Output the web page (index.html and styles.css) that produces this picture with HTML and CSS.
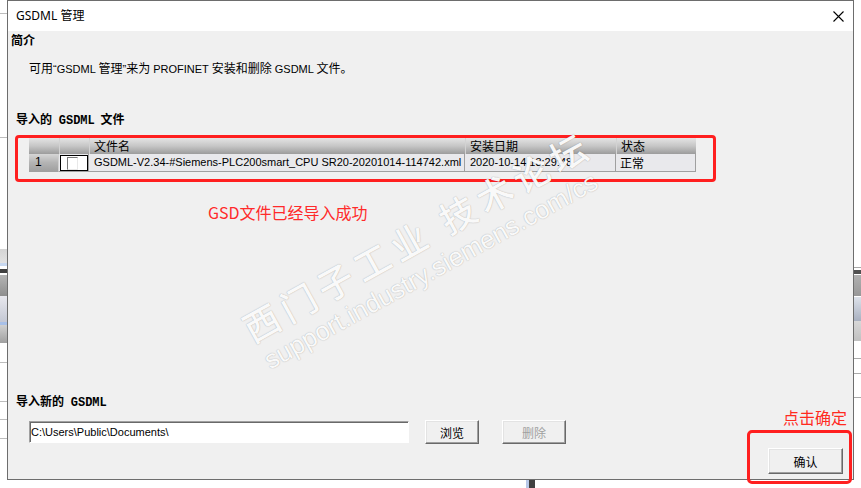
FILE: index.html
```html
<!DOCTYPE html>
<html lang="zh-CN">
<head>
<meta charset="utf-8">
<title>GSDML 管理</title>
<link rel="stylesheet" href="styles.css">
</head>
<body>
<div class="dialog">
  <div class="titlebar">
    <span class="title">GSDML 管理</span>
    <svg class="close" width="11" height="11" viewBox="0 0 11 11"><path d="M0.5 0.5 L10.5 10.5 M10.5 0.5 L0.5 10.5" stroke="#000" stroke-width="1.1" fill="none"/></svg>
  </div>
  <div class="content">
    <div class="intro-h">简介</div>
    <p class="desc">可用<span class="lat">“GSDML </span>管理<span class="lat">”</span>来为<span class="lat"> PROFINET </span>安装和删除<span class="lat"> GSDML </span>文件。</p>

    <div class="sec-h">导入的 <span class="mono">GSDML</span> 文件</div>
    <div class="callout">
      <div class="grid">
        <div class="grow head">
          <div class="hc"></div>
          <div class="hc"></div>
          <div class="hc">文件名</div>
          <div class="hc">安装日期</div>
          <div class="hc">状态</div>
        </div>
        <div class="grow data">
          <div class="dc num">1</div>
          <div class="dc chk"><span class="box"><span class="inner"></span></span></div>
          <div class="dc">GSDML-V2.34-#Siemens-PLC200smart_CPU SR20-20201014-114742.xml</div>
          <div class="dc">2020-10-14 13:29:48</div>
          <div class="dc cn">正常</div>
        </div>
      </div>
    </div>
    <div class="note">GSD文件已经导入成功</div>

    <div class="footer">
      <div class="footer-left">
        <div class="sec-h first">导入新的 <span class="mono">GSDML</span></div>
        <div class="row">
          <input class="field" type="text" value="C:\Users\Public\Documents\" readonly>
          <button class="btn browse">浏览</button>
          <button class="btn del" disabled>删除</button>
        </div>
      </div>
      <div class="footer-right">
        <div class="hint">点击确定</div>
        <button class="btn ok">确认</button>
      </div>
    </div>
  </div>

  <div class="ok-frame"></div>
  <div class="wm wm-cn">西门子工业 技术论坛</div>
  <div class="wm wm-url">support.industry.siemens.com/cs</div>
</div>
</body>
</html>
```

FILE: styles.css
```css
html, body {
  margin: 0;
  padding: 0;
}
body {
  width: 861px;
  height: 488px;
  overflow: hidden;
  font-family: "Liberation Sans", "Noto Sans CJK SC", sans-serif;
  font-size: 12px;
  color: #000;
  background-color: #fff;
  background:
    linear-gradient(#bdbdbd, #bdbdbd) 0 13px / 7px 1px no-repeat,
    linear-gradient(#bdbdbd, #bdbdbd) 0 137px / 7px 1px no-repeat,
    linear-gradient(#d4d4d4, #e2e2e2) 0 249px / 7px 14px no-repeat,
    linear-gradient(#c8d8f0, #c8d8f0) 0 263px / 7px 3px no-repeat,
    linear-gradient(#404040, #404040) 0 269px / 7px 4px no-repeat,
    linear-gradient(#b4b4b4, #8e8e8e) 0 275px / 7px 21px no-repeat,
    linear-gradient(#e8e8ee, #c4c8d4) 0 296px / 7px 26px no-repeat,
    linear-gradient(#a8c0e8, #a8c0e8) 0 322px / 7px 3px no-repeat,
    linear-gradient(#d0d0d0, #a0a0a0) 0 325px / 7px 18px no-repeat,
    linear-gradient(#bdbdbd, #bdbdbd) 0 362px / 7px 1px no-repeat,
    linear-gradient(#bdbdbd, #bdbdbd) 0 401px / 7px 1px no-repeat,
    linear-gradient(#bdbdbd, #bdbdbd) 0 419px / 7px 1px no-repeat,
    linear-gradient(#bdbdbd, #bdbdbd) 0 438px / 7px 1px no-repeat,
    linear-gradient(#a8a8a8, #a8a8a8) right 0 top 267px / 8px 1px no-repeat,
    linear-gradient(#505050, #505050) right 0 top 270px / 8px 4px no-repeat,
    linear-gradient(#b0b0b0, #989898) right 0 top 275px / 8px 21px no-repeat,
    linear-gradient(#dde2ea, #a8b0c0) right 0 top 297px / 8px 24px no-repeat,
    linear-gradient(#d8d8d8, #c0c0c0) right 0 top 321px / 8px 20px no-repeat,
    linear-gradient(#aaaaaa, #aaaaaa) right 0 top 358px / 8px 1px no-repeat,
    linear-gradient(#aaaaaa, #aaaaaa) right 0 top 373px / 8px 1px no-repeat,
    linear-gradient(#aaaaaa, #aaaaaa) right 0 top 397px / 8px 1px no-repeat,
    linear-gradient(#b8c8e8, #b8c8e8) 526px 480px / 3px 8px no-repeat,
    linear-gradient(#404040, #404040) 529px 480px / 6px 8px no-repeat,
    #fff;
}

.dialog {
  position: relative;
  margin-left: 7px;
  width: 845px;
  height: 478px;
  border: 1px solid #6d6d6d;
  background: #f0f0f0;
}

.titlebar {
  height: 30px;
  background: #fff;
  display: flex;
  align-items: center;
  justify-content: space-between;
  padding: 0 9px 0 8px;
}
.title {
  font-family: "Noto Sans", "Noto Sans CJK SC", sans-serif;
  font-size: 12px;
  line-height: 16px;
}
.close {
  display: block;
}

.content {
  font-family: "Noto Sans CJK SC", sans-serif;
}

.intro-h {
  margin: 1px 0 0 3px;
  line-height: 16px;
  font-weight: bold;
}
.desc {
  margin: 12px 0 0 21px;
  line-height: 16px;
  font-size: 12px;
}
.lat {
  font-family: "Liberation Sans", sans-serif;
  font-size: 11px;
}
.sec-h {
  margin: 34px 0 0 8px;
  line-height: 16px;
  font-weight: bold;
  white-space: nowrap;
}
.sec-h.first {
  margin-top: 0;
}
.mono {
  font-family: "Liberation Mono", monospace;
  font-weight: bold;
  font-size: 12px;
  margin: 0 3px 0 4px;
}

.callout {
  box-sizing: border-box;
  margin: 6px 0 0 7px;
  width: 701px;
  height: 47px;
  border: 3px solid #ff1f1f;
  border-radius: 4px;
  padding-left: 11px;
}
.grid {
  width: 667px;
}
.grow {
  display: grid;
  grid-template-columns: 30px 30px 376px 151px 80px;
}
.head {
  height: 16px;
}
.hc {
  box-sizing: border-box;
  height: 16px;
  line-height: 16px;
  padding-left: 4px;
  background: linear-gradient(#e4e4e4, #c6c6c6 50%, #9c9c9c);
  border-left: 1px solid #d2d2d2;
  white-space: nowrap;
}
.hc:first-child {
  border-left: 0;
}
.data {
  height: 18px;
}
.dc {
  box-sizing: border-box;
  height: 18px;
  line-height: 17px;
  padding-left: 5px;
  background: #e9e9ec;
  border-right: 1px solid #a0a0a0;
  border-bottom: 1px solid #a0a0a0;
  white-space: nowrap;
  overflow: hidden;
  font-family: "Liberation Sans", sans-serif;
  font-size: 11px;
}
.dc.cn {
  font-family: "Noto Sans CJK SC", sans-serif;
  font-size: 12px;
  padding-left: 4px;
}
.dc.num {
  padding-left: 6px;
  font-size: 12px;
  background: linear-gradient(#d6d6d6, #b4b4b4 50%, #a0a0a0);
  border-right: 1px solid #d0d0d0;
}
.dc.chk {
  padding: 1px 0 0 1px;
  background: #e9e9ec;
}
.box {
  box-sizing: border-box;
  display: flex;
  width: 28px;
  height: 16px;
  border: 1px solid #000;
  background: #fff;
  padding: 1px 0 0 6px;
}
.inner {
  box-sizing: border-box;
  display: block;
  width: 11px;
  height: 13px;
  border: 1px solid;
  border-color: #7a7a7a #e8e8e8 #e8e8e8 #7a7a7a;
  background: #fff;
}

.note {
  margin: 21px 0 0 200px;
  font-size: 16px;
  line-height: 18px;
  color: #ff2a2a;
}

.footer {
  display: flex;
  margin-top: 172px;
}
.footer-left {
  display: flex;
  flex-direction: column;
}
.row {
  display: flex;
  align-items: flex-start;
  margin: 9px 0 0 21px;
}
.field {
  box-sizing: border-box;
  margin: 1px 0 0 0;
  width: 380px;
  height: 22px;
  padding: 0 0 0 1px;
  border: 1px solid;
  border-color: #a0a0a0 #ffffff #ffffff #a0a0a0;
  box-shadow: inset 1px 1px #696969;
  background: #fff;
  font-family: "Liberation Sans", sans-serif;
  font-size: 11px;
  color: #000;
  outline: none;
}
.btn {
  box-sizing: border-box;
  height: 24px;
  padding: 0;
  margin: 0;
  background: #f0f0f0;
  border: 1px solid;
  border-color: #ffffff #696969 #696969 #ffffff;
  box-shadow: inset -1px -1px #a0a0a0, inset 1px 1px #e3e3e3;
  font-family: "Noto Sans CJK SC", sans-serif;
  font-size: 12px;
  color: #000;
}
.browse {
  margin-left: 16px;
  width: 54px;
}
.del {
  margin-left: 23px;
  width: 64px;
  color: #a0a0a0;
}

.footer-right {
  margin-left: auto;
  padding-right: 6px;
  display: flex;
  flex-direction: column;
  align-items: flex-end;
}
.hint {
  margin-top: 15px;
  font-size: 16px;
  line-height: 18px;
  color: #ff2b1f;
}
.ok {
  margin: 22px 4px 0 0;
  width: 75px;
  height: 26px;
}

.ok-frame {
  position: absolute;
  left: 739px;
  top: 429px;
  width: 105px;
  height: 54px;
  box-sizing: border-box;
  border: 3px solid #ff1f1f;
  border-radius: 5px;
  pointer-events: none;
}

.wm {
  position: absolute;
  white-space: nowrap;
  color: rgba(255, 255, 255, 0.95);
  text-shadow: 0 0 1px rgba(0, 0, 0, 0.28), 0 0 2px rgba(0, 0, 0, 0.08);
  transform: rotate(-29deg);
  transform-origin: 0 50%;
  pointer-events: none;
}
.wm-cn {
  left: 237px;
  top: 309px;
  font-family: "Noto Sans CJK SC", sans-serif;
  font-size: 36px;
  font-weight: 500;
  line-height: 40px;
  letter-spacing: 6px;
}
.wm-url {
  left: 258px;
  top: 346px;
  font-family: "Liberation Sans", sans-serif;
  font-size: 26px;
  line-height: 30px;
}
```
